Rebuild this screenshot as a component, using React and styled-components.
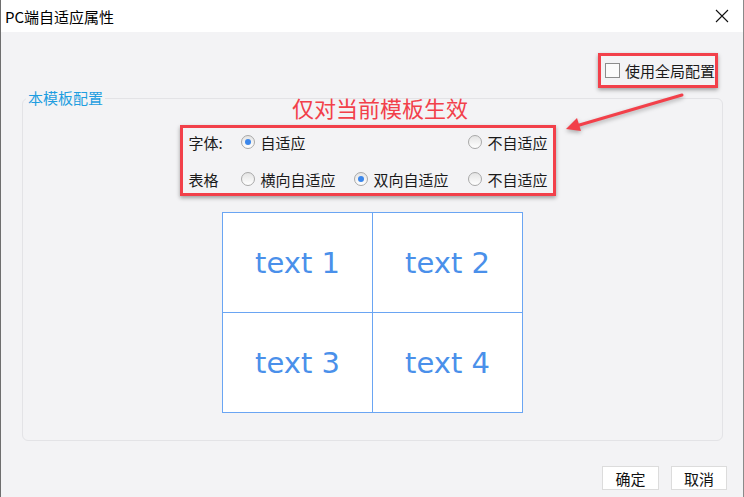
import styled, { createGlobalStyle } from "styled-components";

const GlobalStyle = createGlobalStyle`
    html, body {
        margin: 0;
        padding: 0;
        background: #ffffff;
    }
    * {
        box-sizing: border-box;
    }
`

const CN = `"Noto Sans CJK SC", "Liberation Sans", sans-serif`;
const RED = "#f2404a";

const Window = styled.div`
    position: relative;
    width: 744px;
    height: 497px;
    display: flex;
    flex-direction: column;
    background: #f3f3f5;
    border-left: 1px solid #6e6e6e;
    border-right: 1px solid #8a8a8a;
    font-family: ${CN};
    font-size: 15px;
    color: #1a1a1a;
    overflow: hidden;
`

const TitleBar = styled.div`
    height: 32px;
    flex-shrink: 0;
    display: flex;
    align-items: center;
    justify-content: space-between;
    padding: 0 13px 0 4px;
    background: #ffffff;
    font-size: 15px;
    color: #000;
`

const CloseButton = styled.div`
    width: 16px;
    height: 16px;
    display: flex;
    align-items: center;
    justify-content: center;
`

const TopRow = styled.div`
    display: flex;
    justify-content: flex-end;
    margin-top: 21px;
    padding-right: 25px;
`

const RedBox = styled.div`
    border: 3px solid ${RED};
    box-shadow: 0 2px 4px rgba(0, 0, 0, 0.35);
`

const GlobalBox = styled(RedBox)`
    width: 120px;
    height: 35px;
    display: flex;
    align-items: center;
    gap: 5px;
    padding: 0 0 0 4px;
    white-space: nowrap;
    font-size: 15px;
`

const CheckBox = styled.span`
    flex-shrink: 0;
    width: 15px;
    height: 15px;
    border: 1px solid #8c8c8c;
    background: #fbfbfb;
`

const Panel = styled.fieldset`
    margin: 2px 20px 0 21px;
    padding: 0 3px 27px 3px;
    border: 1px solid #e3e3e6;
    border-radius: 6px;
    display: flex;
    flex-direction: column;
    align-items: center;
`

const PanelLegend = styled.legend`
    padding: 0 2px;
    font-size: 15px;
    line-height: 16px;
    color: #1e9ee0;
`

const Note = styled.div`
    margin: -12px 0 0 15px;
    font-size: 22px;
    line-height: 26px;
    color: ${RED};
`

const OptionBox = styled(RedBox)`
    margin: 5px 10px 0 0;
    width: 376px;
    display: grid;
    grid-template-columns: 52px 113px 114px auto;
    row-gap: 13px;
    padding: 2px 0 2px 6px;
    white-space: nowrap;
`

const RowLabel = styled.span`
    height: 24px;
    display: flex;
    align-items: center;
`

const Option = styled.label`
    height: 24px;
    display: flex;
    align-items: center;
    gap: 6px;
    grid-column: ${p => p.col};
`

const Radio = styled.span`
    width: 14px;
    height: 14px;
    border-radius: 50%;
    border: 1px solid #a8a8a8;
    background: linear-gradient(#e4e4e4, #ffffff);
    display: flex;
    align-items: center;
    justify-content: center;

    &::after {
        content: "";
        width: 6px;
        height: 6px;
        border-radius: 50%;
        background: ${p => (p.checked ? "#3b86ea" : "transparent")};
    }
`

const Table = styled.div`
    margin-top: 16px;
    display: grid;
    grid-template-columns: 149px 149px;
    grid-template-rows: 99px 99px;
    gap: 1px;
    border: 1px solid #6aa5f3;
    background: #6aa5f3;
`

const Cell = styled.div`
    background: #ffffff;
    display: flex;
    align-items: center;
    justify-content: center;
    font-family: "DejaVu Sans", Verdana, sans-serif;
    font-size: 29px;
    color: #4a90ea;
`

const Footer = styled.div`
    display: flex;
    justify-content: flex-end;
    gap: 12px;
    margin-top: 25px;
    padding-right: 16px;
`

const Button = styled.button`
    width: ${p => p.w}px;
    height: 24px;
    padding: 0;
    border: 1px solid #dcdcdc;
    background: #ffffff;
    font-family: ${CN};
    font-size: 15px;
    color: #111;
`

const Arrow = styled.svg`
    position: absolute;
    left: 559px;
    top: 88px;
    filter: drop-shadow(0 2px 2px rgba(0, 0, 0, 0.3));
`

const App = () => {
    return (
        <Window>
            <GlobalStyle />
            <TitleBar>
                <span>PC端自适应属性</span>
                <CloseButton>
                    <svg width="14" height="14" viewBox="0 0 14 14">
                        <path d="M1 1 L13 13 M13 1 L1 13" stroke="#111" strokeWidth="1.1" />
                    </svg>
                </CloseButton>
            </TitleBar>

            <TopRow>
                <GlobalBox>
                    <CheckBox />
                    <span>使用全局配置</span>
                </GlobalBox>
            </TopRow>

            <Panel>
                <PanelLegend>本模板配置</PanelLegend>
                <Note>仅对当前模板生效</Note>
                <OptionBox>
                    <RowLabel>字体:</RowLabel>
                    <Option col={2}><Radio checked />自适应</Option>
                    <Option col={4}><Radio />不自适应</Option>

                    <RowLabel>表格</RowLabel>
                    <Option col={2}><Radio />横向自适应</Option>
                    <Option col={3}><Radio checked />双向自适应</Option>
                    <Option col={4}><Radio />不自适应</Option>
                </OptionBox>
                <Table>
                    <Cell>text 1</Cell>
                    <Cell>text 2</Cell>
                    <Cell>text 3</Cell>
                    <Cell>text 4</Cell>
                </Table>
            </Panel>

            <Footer>
                <Button w={57}>确定</Button>
                <Button w={56}>取消</Button>
            </Footer>

            <Arrow width="130" height="50" viewBox="0 0 130 50">
                <line x1="122" y1="7" x2="16" y2="38" stroke={RED} strokeWidth="3" strokeLinecap="round" />
                <polygon points="6,41 21,43 17,30" fill={RED} />
            </Arrow>
        </Window>
    )
}

export default App;
